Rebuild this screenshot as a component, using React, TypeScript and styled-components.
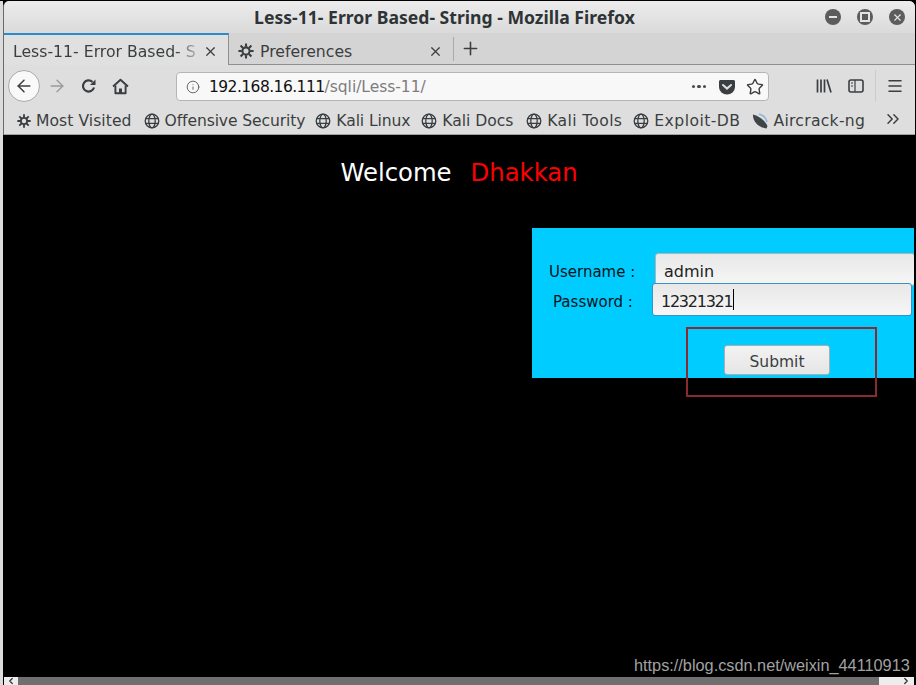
import React from "react";
import styled, { createGlobalStyle } from "styled-components";
import { Info, ArrowRight, ArrowLeft, Plus, X, Star, Menu, ChevronsRight, ChevronLeft, ChevronRight } from "lucide-react";

const Global = createGlobalStyle`
  html, body { margin: 0; padding: 0; background: #000; overflow: hidden; }
  #root { width: 916px; height: 685px; }
`;
const FONT = `"DejaVu Sans", sans-serif`;

const Screen = styled.div`
  width: 916px; height: 685px; position: relative; background: #000; overflow: hidden;
  font-family: ${FONT}; display: flex; flex-direction: column;
`;
const Frame = styled.div`
  flex: 1; min-height: 0; display: flex; flex-direction: column;
  margin: 1px 1px 0 0; padding-left: 3px; background: linear-gradient(90deg, #dcdcdc 3px, transparent 3px);
`;
const Chrome = styled.div`
  display: flex; flex-direction: column; background: #d8d8d8; border-left: 1px solid #6a6a6a;
  border-top-left-radius: 6px; border-top-right-radius: 6px; overflow: hidden;
`;
const TitleBar = styled.div`
  height: 32px; display: flex; align-items: center; justify-content: center; position: relative;
  background: linear-gradient(#ececec, #dadada);
  font-family: "Noto Sans", sans-serif; font-size: 17.6px; font-weight: 700; color: #2e3436;
`;
const TitleText = styled.span` margin-left: -30px; `;
const WindowButtons = styled.div`
  position: absolute; right: 10px; top: 8px; display: flex; gap: 16px;
`;
const WinBtn = styled.div`
  width: 16px; height: 16px; border-radius: 50%; background: #5a5c5e;
  display: flex; align-items: center; justify-content: center; color: #e4e4e4;
`;
const MinBar = styled.div` width: 8px; height: 2px; background: #e4e4e4; `;
const MaxBox = styled.div` width: 6px; height: 6px; border: 2px solid #e4e4e4; `;
const TabStrip = styled.div`
  height: 32px; display: flex; align-items: stretch; border-bottom: 1px solid #8f8f8f; box-sizing: border-box;
  background: #d4d4d4; font-size: 15.7px; color: #3b3e40;
`;
const ActiveTab = styled.div`
  width: 215px; display: flex; align-items: center; padding: 2px 0 0 9px; background: #e0e0e0;
  border-top: 2px solid #2b8ac9; margin-bottom: -1px; border-right: 1px solid #8f8f8f; white-space: nowrap;
`;
const FadeText = styled.span`
  width: 185px; display: block; white-space: nowrap;
  -webkit-mask-image: linear-gradient(90deg, #000 88%, rgba(0,0,0,.2) 100%);
  mask-image: linear-gradient(90deg, #000 88%, rgba(0,0,0,.2) 100%);
`;
const TabClose = styled.span` display: flex; margin-left: auto; margin-right: 10px; color: #3b3e40; `;
const Tab = styled.div`
  width: 224px; display: flex; align-items: center; padding: 5px 0 0 9px; gap: 6px; box-sizing: border-box;
`;
const Separator = styled.div` width: 1px; height: 24px; align-self: center; background: #a9a9a9; `;
const NewTab = styled.div` display: flex; align-items: center; margin-left: 6px; color: #3b3e40; `;
const NavBar = styled.div`
  height: 40px; box-sizing: border-box; display: flex; align-items: center; background: #dedede; padding: 2px 0 0 4px;
`;
const BackButton = styled.div`
  width: 32px; height: 32px; box-sizing: border-box; border-radius: 50%; background: #f9f9f9; border: 1px solid #a9a9a9;
  display: flex; align-items: center; justify-content: center; color: #3b3e40;
`;
const NavIcon = styled.div<{ $w: number }>`
  width: ${(p) => p.$w}px; display: flex; justify-content: center; color: #3b3e40;
`;
const UrlBar = styled.div`
  margin-left: 40px; width: 593px; height: 29px; box-sizing: border-box; background: #f8f8f8; border: 1px solid #b5b5b5; border-radius: 4px;
  display: flex; align-items: center; padding: 1px 0 0 9px; font-size: 15.5px; color: #7d7d7d;
`;
const Host = styled.span` color: #111; margin-left: 9px; letter-spacing: -0.55px; `;
const Path = styled.span` letter-spacing: -0.03px; `;
const UrlIcons = styled.div` margin-left: auto; display: flex; align-items: center; gap: 10px; margin-right: 4px; color: #3b3e40; `;
const Dots = styled.div` display: flex; gap: 2px; margin-right: 2px; `;
const Dot = styled.span` width: 3.5px; height: 3.5px; border-radius: 50%; background: #4a4d4f; `;
const Tools = styled.div` margin-left: 47px; display: flex; align-items: center; gap: 16px; color: #3b3e40; `;
const ToolSep = styled.div` width: 1px; height: 32px; background: #cbcbcb; margin: 0 -6px 0 -5px; `;
const Bookmarks = styled.div`
  height: 30px; box-sizing: border-box; padding: 3px 0 0 13px; display: flex; align-items: center; background: #dedede; font-size: 15.6px; color: #3b3e40;
  border-bottom: 1px solid #a0a0a0; position: relative; white-space: nowrap;
`;
const Mark = styled.div<{ $gap: number; $ls?: number }>`
  display: flex; align-items: center; gap: 5px; margin-right: ${(p) => p.$gap}px;
  letter-spacing: ${(p) => p.$ls ?? -0.12}px;
`;
const Overflow = styled.div` position: absolute; right: 12px; top: 4px; color: #3b3e40; display: flex; `;
const Page = styled.div`
  flex: 1; min-height: 0; background: #000; display: flex; flex-direction: column; align-items: flex-end; margin-right: 1px;
`;
const Welcome = styled.div`
  align-self: stretch; display: flex; justify-content: center; gap: 19px; font-size: 24.3px; color: #fff; height: 93px; padding: 22px 0 0 1px; box-sizing: border-box; line-height: 32px;
`;
const Red = styled.span` color: #ff0000; `;
const FormPanel = styled.div`
  width: 382px; height: 150px; background: #00ccff; display: flex; flex-direction: column; font-size: 15px; color: #06151a; overflow: hidden;
`;
const Row = styled.div<{ $left: number; $field: number; $top: number }>`
  display: flex; align-items: center; margin-top: ${(p) => p.$top}px; padding-left: ${(p) => p.$left}px;
  & > label { width: ${(p) => p.$field}px; flex: none; padding-top: 5px; }
`;
const Input = styled.div<{ $focus?: boolean }>`
  flex: none; width: 260px; height: 33px; box-sizing: border-box; border-radius: 3px; padding: 3px 0 0 8px; display: flex; align-items: center;
  background: linear-gradient(#e8e8e8, #f6f6f6); font-size: 16px; color: #222;
  letter-spacing: ${(p) => (p.$focus ? "-1.25px" : "0")};
  border: 1px solid ${(p) => (p.$focus ? "#3d8fc4" : "#b0b4b6")};
`;
const Caret = styled.span` width: 1px; height: 21px; background: #000; margin: -3px 0 0 1px; `;
const Submit = styled.div`
  align-self: flex-start; margin: 29px 0 0 192px; width: 106px; height: 30px; box-sizing: border-box; border: 1px solid #a8b0b3; border-radius: 3px; padding-top: 3px;
  background: linear-gradient(#f2f2f2, #e6e6e6); font-size: 15.5px; color: #3b3e40; display: flex; align-items: center; justify-content: center;
`;
const Annotation = styled.div`
  position: absolute; left: 686px; top: 327px; width: 191px; height: 70px; box-sizing: border-box; border: 2px solid #8a2a2e;
`;
const Watermark = styled.div`
  position: absolute; left: 634px; top: 656px; font-family: "Liberation Sans", sans-serif; font-size: 16.3px; color: #a2a2a2; white-space: nowrap;
`;
const ScrollBar = styled.div`
  height: 8px; display: flex; background: #6f6f6f; margin-right: 1px; margin-left: 1px;
`;
const ScrollStart = styled.div`
  width: 14px; background: #ededed; display: flex; align-items: center; justify-content: center; color: #333; overflow: hidden;
`;
const ScrollEnd = styled.div`
  width: 35px; background: #ededed; display: flex; align-items: center; justify-content: flex-end; padding-right: 3px; box-sizing: border-box; color: #333; overflow: hidden;
`;
const ScrollFill = styled.div` flex: 1; `;

const Gear = ({ s = 16 }: { s?: number }) => (
  <svg width={s} height={s} viewBox="0 0 16 16" fill="none" stroke="#3b3e40" strokeWidth="2.1">
    <circle cx="8" cy="8" r="3.6" />
    <path d="M8 0.4v3.4M8 12.2v3.4M0.4 8h3.4M12.2 8h3.4M2.6 2.6l2.4 2.4M11 11l2.4 2.4M13.4 2.6L11 5M5 11l-2.4 2.4" />
  </svg>
);
const Globe = () => (
  <svg width="16" height="16" viewBox="0 0 16 16" fill="none" stroke="#3b3e40" strokeWidth="1.3">
    <circle cx="8" cy="8" r="6.8" />
    <ellipse cx="8" cy="8" rx="3.2" ry="6.8" />
    <path d="M1.2 5.6h13.6M1.2 10.4h13.6" />
  </svg>
);
const Dish = () => (
  <svg width="16" height="16" viewBox="0 0 16 16">
    <path d="M1 1.5 C0.5 8 6 14.5 14.5 15.5 L15.5 13 C12.5 7 7 3 1 1.5Z" fill="#3f4447" />
    <path d="M7 1 C11 2 14 5 15 9" fill="none" stroke="#8fb6dc" strokeWidth="1.6" />
  </svg>
);
const Pocket = () => (
  <svg width="18" height="16" viewBox="0 0 18 16">
    <path d="M1 2.5C1 1.7 1.7 1 2.5 1h13c.8 0 1.5.7 1.5 1.5V8a8 7.5 0 0 1-16 0Z" fill="#3b3e40" />
    <path d="M5 6l4 3.6L13 6" fill="none" stroke="#dedede" strokeWidth="2" strokeLinecap="round" />
  </svg>
);
const Library = () => (
  <svg width="16" height="16" viewBox="0 0 16 16" stroke="#3b3e40" strokeWidth="1.7" fill="none">
    <path d="M1.5 1.5v13M5 1.5v13M8.5 1.5v13M11 1.5l4 13" />
  </svg>
);
const Sidebar = () => (
  <svg width="16" height="16" viewBox="0 0 16 16" stroke="#3b3e40" strokeWidth="1.6" fill="none">
    <rect x="1" y="2" width="14" height="12" rx="2" />
    <path d="M7 2v12M3 5h2M3 8h2" strokeWidth="1.2" />
  </svg>
);
const Reload = () => (
  <svg width="16" height="16" viewBox="0 0 16 16" fill="none" stroke="#3b3e40" strokeWidth="2.2">
    <path d="M13 9.5A5.6 5.6 0 1 1 11.5 4" />
    <path d="M14.5 1.5v5.5H9z" fill="#3b3e40" stroke="none" />
  </svg>
);
const HomeIcon = () => (
  <svg width="17" height="17" viewBox="0 0 16 16" fill="none" stroke="#3b3e40" strokeWidth="1.8" strokeLinejoin="round">
    <path d="M1 8 8 1.6 15 8" />
    <path d="M3.2 7v7.4h9.6V7" />
    <path d="M6.6 14.4V9.8h2.8v4.6" fill="#3b3e40" stroke="none" />
  </svg>
);

export default function App() {
  return (
    <Screen>
      <Global />
      <Frame>
        <Chrome>
          <TitleBar>
            <TitleText>Less-11- Error Based- String - Mozilla Firefox</TitleText>
            <WindowButtons>
              <WinBtn><MinBar /></WinBtn>
              <WinBtn><MaxBox /></WinBtn>
              <WinBtn><X size={11} strokeWidth={2.5} /></WinBtn>
            </WindowButtons>
          </TitleBar>
          <TabStrip>
            <ActiveTab>
              <FadeText>Less-11- Error Based- S</FadeText>
              <TabClose><X size={15} strokeWidth={1.9} /></TabClose>
            </ActiveTab>
            <Tab>
              <Gear />
              <span>Preferences</span>
              <TabClose><X size={15} strokeWidth={1.9} /></TabClose>
            </Tab>
            <Separator />
            <NewTab><Plus size={21} strokeWidth={1.8} /></NewTab>
          </TabStrip>
          <NavBar>
            <BackButton><ArrowLeft size={20} strokeWidth={1.8} /></BackButton>
            <NavIcon $w={34}><ArrowRight size={20} strokeWidth={1.6} color="#9a9a9a" /></NavIcon>
            <NavIcon $w={30}><Reload /></NavIcon>
            <NavIcon $w={32}><HomeIcon /></NavIcon>
            <UrlBar>
              <Info size={14} strokeWidth={1.4} color="#4a4a4a" />
              <Host>192.168.16.111</Host>
              <Path>/sqli/Less-11/</Path>
              <UrlIcons>
                <Dots><Dot /><Dot /><Dot /></Dots>
                <Pocket />
                <Star size={18} strokeWidth={1.9} />
              </UrlIcons>
            </UrlBar>
            <Tools>
              <Library />
              <Sidebar />
              <ToolSep />
              <Menu size={18} strokeWidth={2} />
            </Tools>
          </NavBar>
          <Bookmarks>
            <Mark $gap={12} $ls={0.05}><Gear s={14} /><span>Most Visited</span></Mark>
            <Mark $gap={10}><Globe /><span>Offensive Security</span></Mark>
            <Mark $gap={11}><Globe /><span>Kali Linux</span></Mark>
            <Mark $gap={13} $ls={-0.05}><Globe /><span>Kali Docs</span></Mark>
            <Mark $gap={11} $ls={0.35}><Globe /><span>Kali Tools</span></Mark>
            <Mark $gap={12} $ls={0.45}><Globe /><span>Exploit-DB</span></Mark>
            <Mark $gap={0} $ls={0.28}><Dish /><span>Aircrack-ng</span></Mark>
            <Overflow><ChevronsRight size={20} strokeWidth={1.8} /></Overflow>
          </Bookmarks>
        </Chrome>
        <Page>
          <Welcome><span>Welcome</span><Red>Dhakkan</Red></Welcome>
          <FormPanel>
            <Row $left={17} $field={106} $top={25}>
              <label>Username :</label>
              <Input>admin</Input>
            </Row>
            <Row $left={21} $field={99} $top={-3}>
              <label>Password :</label>
              <Input $focus>12321321<Caret /></Input>
            </Row>
            <Submit>Submit</Submit>
          </FormPanel>
        </Page>
        <ScrollBar>
          <ScrollStart><ChevronLeft size={10} strokeWidth={3} /></ScrollStart>
          <ScrollFill />
          <ScrollEnd><ChevronRight size={10} strokeWidth={3} /></ScrollEnd>
        </ScrollBar>
      </Frame>
      <Annotation />
      <Watermark>https://blog.csdn.net/weixin_44110913</Watermark>
    </Screen>
  );
}
